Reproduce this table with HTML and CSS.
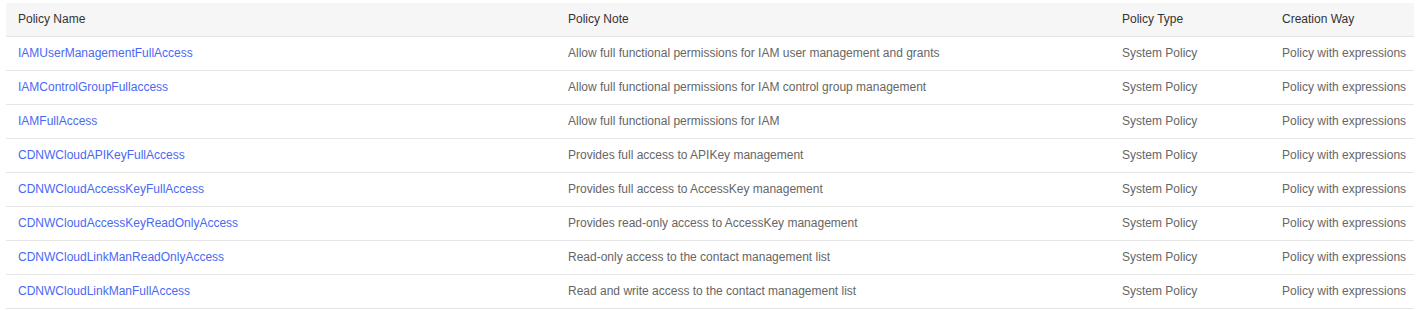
FILE: index.html
```html
<!DOCTYPE html>
<html lang="en">
<head>
    <meta charset="UTF-8">
    <title>Policies</title>
    <link rel="stylesheet" href="styles.css">
</head>
<body>
    <table class="policy-table">
        <colgroup>
            <col class="col-name">
            <col class="col-note">
            <col class="col-type">
            <col class="col-way">
        </colgroup>
        <thead>
            <tr>
                <th>Policy Name</th>
                <th>Policy Note</th>
                <th>Policy Type</th>
                <th>Creation Way</th>
            </tr>
        </thead>
        <tbody>
            <tr>
                <td><a href="#">IAMUserManagementFullAccess</a></td>
                <td>Allow full functional permissions for IAM user management and grants</td>
                <td>System Policy</td>
                <td>Policy with expressions</td>
            </tr>
            <tr>
                <td><a href="#">IAMControlGroupFullaccess</a></td>
                <td>Allow full functional permissions for IAM control group management</td>
                <td>System Policy</td>
                <td>Policy with expressions</td>
            </tr>
            <tr>
                <td><a href="#">IAMFullAccess</a></td>
                <td>Allow full functional permissions for IAM</td>
                <td>System Policy</td>
                <td>Policy with expressions</td>
            </tr>
            <tr>
                <td><a href="#">CDNWCloudAPIKeyFullAccess</a></td>
                <td>Provides full access to APIKey management</td>
                <td>System Policy</td>
                <td>Policy with expressions</td>
            </tr>
            <tr>
                <td><a href="#">CDNWCloudAccessKeyFullAccess</a></td>
                <td>Provides full access to AccessKey management</td>
                <td>System Policy</td>
                <td>Policy with expressions</td>
            </tr>
            <tr>
                <td><a href="#">CDNWCloudAccessKeyReadOnlyAccess</a></td>
                <td>Provides read-only access to AccessKey management</td>
                <td>System Policy</td>
                <td>Policy with expressions</td>
            </tr>
            <tr>
                <td><a href="#">CDNWCloudLinkManReadOnlyAccess</a></td>
                <td>Read-only access to the contact management list</td>
                <td>System Policy</td>
                <td>Policy with expressions</td>
            </tr>
            <tr>
                <td><a href="#">CDNWCloudLinkManFullAccess</a></td>
                <td>Read and write access to the contact management list</td>
                <td>System Policy</td>
                <td>Policy with expressions</td>
            </tr>
        </tbody>
    </table>
</body>
</html>
```

FILE: styles.css
```css
body {
    margin: 0;
    padding: 3px 4px 0 6px;
    background: #fff;
    font-family: 'Liberation Sans', Arial, sans-serif;
    font-size: 12px;
    color: #666;
}

/* Policy list */
.policy-table {
    width: 1408px;
    border-collapse: collapse;
    table-layout: fixed;
}

.col-name { width: 550px; }
.col-note { width: 554px; }
.col-type { width: 160px; }
.col-way { width: 144px; }

.policy-table th,
.policy-table td {
    height: 32px;
    padding: 0 12px 1px;
    text-align: left;
    vertical-align: middle;
    border-bottom: 1px solid #e6e6e6;
    white-space: nowrap;
    overflow: hidden;
}

.policy-table th {
    background: #f6f6f6;
    color: #333;
    font-weight: normal;
}

.policy-table a {
    color: #4a68f5;
    text-decoration: none;
}
```
